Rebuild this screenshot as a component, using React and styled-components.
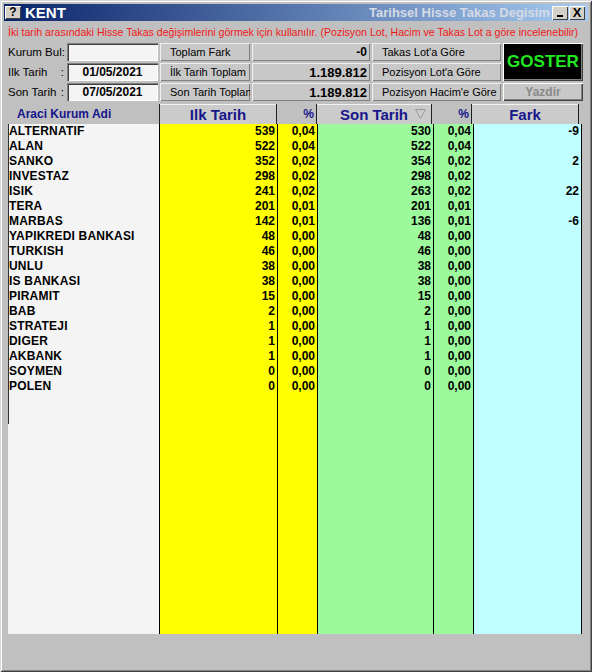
import React from 'react'
import styled, { createGlobalStyle } from 'styled-components'

const GlobalStyle = createGlobalStyle`
  html, body {
    margin: 0;
    padding: 0;
    background: #c0c0c0;
  }
  * {
    box-sizing: border-box;
  }
`

const rows = [
  ['ALTERNATIF', '539', '0,04', '530', '0,04', '-9'],
  ['ALAN', '522', '0,04', '522', '0,04', ''],
  ['SANKO', '352', '0,02', '354', '0,02', '2'],
  ['INVESTAZ', '298', '0,02', '298', '0,02', ''],
  ['ISIK', '241', '0,02', '263', '0,02', '22'],
  ['TERA', '201', '0,01', '201', '0,01', ''],
  ['MARBAS', '142', '0,01', '136', '0,01', '-6'],
  ['YAPIKREDI BANKASI', '48', '0,00', '48', '0,00', ''],
  ['TURKISH', '46', '0,00', '46', '0,00', ''],
  ['UNLU', '38', '0,00', '38', '0,00', ''],
  ['IS BANKASI', '38', '0,00', '38', '0,00', ''],
  ['PIRAMIT', '15', '0,00', '15', '0,00', ''],
  ['BAB', '2', '0,00', '2', '0,00', ''],
  ['STRATEJI', '1', '0,00', '1', '0,00', ''],
  ['DIGER', '1', '0,00', '1', '0,00', ''],
  ['AKBANK', '1', '0,00', '1', '0,00', ''],
  ['SOYMEN', '0', '0,00', '0', '0,00', ''],
  ['POLEN', '0', '0,00', '0', '0,00', ''],
]

const columns = [
  { key: 1, width: 118, bg: '#ffff00' },
  { key: 2, width: 40, bg: '#ffff00' },
  { key: 3, width: 116, bg: '#9cfa9c' },
  { key: 4, width: 40, bg: '#9cfa9c' },
  { key: 5, width: 108, bg: '#c0ffff' },
]

export default function App() {
  return (
    <>
      <GlobalStyle />
      <Window>
        <TitleBar>
          <HelpIcon>?</HelpIcon>
          <TitleText>KENT</TitleText>
          <Spacer />
          <SubTitle>Tarihsel Hisse Takas Degisim</SubTitle>
          <WinButtons>
            <WinButton><MinBar /></WinButton>
            <WinButton>X</WinButton>
          </WinButtons>
        </TitleBar>

        <Notice>
          İki tarih arasındaki Hisse Takas değişimlerini görmek için kullanılır. (Pozisyon Lot, Hacim ve Takas Lot a göre incelenebilir)
        </Notice>

        <Form>
          <Label><span>Kurum Bul</span><span>:</span></Label>
          <Field />
          <Button>Toplam Fark</Button>
          <Value $light>-0</Value>
          <Button>Takas Lot'a Göre</Button>
          <Goster>GOSTER</Goster>

          <Label><span>Ilk Tarih</span><span>:</span></Label>
          <Field $date>01/05/2021</Field>
          <Button>İlk Tarih Toplam</Button>
          <Value>1.189.812</Value>
          <Button>Pozisyon Lot'a Göre</Button>

          <Label><span>Son Tarih</span><span>:</span></Label>
          <Field $date>07/05/2021</Field>
          <Button>Son Tarih Toplam</Button>
          <Value>1.189.812</Value>
          <Button>Pozisyon Hacim'e Göre</Button>
          <Yazdir>Yazdir</Yazdir>
        </Form>

        <Table>
          <HeaderRow>
            <NameHeader>Araci Kurum Adi</NameHeader>
            <HeadButton $width={118}>Ilk Tarih</HeadButton>
            <PctHead $width={40}>%</PctHead>
            <HeadButton $width={116}>
              Son Tarih
              <SortIcon width="11" height="10" viewBox="0 0 11 10">
                <polygon points="0.5,0.5 10.5,0.5 5.5,9.5" fill="none" stroke="#9a9a9a" strokeWidth="1" />
              </SortIcon>
            </HeadButton>
            <PctHead $width={40}>%</PctHead>
            <HeadButton $width={108}>Fark</HeadButton>
          </HeaderRow>

          <Body>
            <NameColumn>
              {rows.map((r) => (
                <NameCell key={r[0]}>{r[0]}</NameCell>
              ))}
            </NameColumn>
            {columns.map((c) => (
              <DataColumn key={c.key} $width={c.width} $bg={c.bg}>
                {rows.map((r) => (
                  <NumCell key={r[0]}>{r[c.key]}</NumCell>
                ))}
              </DataColumn>
            ))}
          </Body>
        </Table>
      </Window>
    </>
  )
}

const Window = styled.div`
  width: 592px;
  height: 672px;
  background: #c0c0c0;
  padding: 4px;
  display: flex;
  flex-direction: column;
  box-shadow: inset 1px 1px #d8d8d8, inset -1px -1px #404040,
    inset 2px 2px #ffffff, inset -2px -2px #808080;
  font-family: 'Liberation Sans', Arial, sans-serif;
`

const TitleBar = styled.div`
  height: 17px;
  display: flex;
  align-items: center;
  background: linear-gradient(to right, #0a246a, #a6caf0);
  padding: 0 3px 0 1px;
`

const HelpIcon = styled.div`
  width: 16px;
  height: 13px;
  background: #d4d0c8;
  color: #000;
  font-weight: 700;
  font-size: 12px;
  line-height: 13px;
  text-align: center;
  box-shadow: inset 1px 1px #fff, inset -1px -1px #404040;
`

const TitleText = styled.div`
  color: #fff;
  font-weight: 700;
  font-size: 15px;
  margin-left: 4px;
`

const Spacer = styled.div`
  flex: 1;
`

const SubTitle = styled.div`
  width: 183px;
  overflow: hidden;
  white-space: nowrap;
  color: #d4dbe6;
  font-weight: 700;
  font-size: 13px;
`

const WinButtons = styled.div`
  display: flex;
  gap: 1px;
`

const WinButton = styled.div`
  width: 16px;
  height: 14px;
  background: #d4d0c8;
  box-shadow: inset 1px 1px #fff, inset -1px -1px #404040;
  display: flex;
  align-items: center;
  justify-content: center;
  font-weight: 700;
  font-size: 13px;
  color: #000;
`

const MinBar = styled.div`
  width: 6px;
  height: 2px;
  background: #000;
  margin-top: 6px;
`

const Notice = styled.div`
  height: 22px;
  padding-left: 4px;
  display: flex;
  align-items: center;
  white-space: nowrap;
  overflow: hidden;
  color: #f01818;
  font-size: 10.6px;
`

const Form = styled.div`
  padding-left: 4px;
  display: grid;
  grid-template-columns: 57px 91px 90px 118px 129px 80px;
  grid-template-rows: 18px 18px 18px;
  column-gap: 2px;
  row-gap: 2px;
  font-size: 11px;
  color: #000;
`

const Label = styled.div`
  display: flex;
  justify-content: space-between;
  align-items: center;
  white-space: nowrap;
  padding-right: 1px;
  font-size: 11.5px;
`

const Field = styled.div`
  background: #f4f4f4;
  box-shadow: inset 1px 1px #808080, inset 2px 2px #404040,
    inset -1px -1px #ffffff;
  display: flex;
  align-items: center;
  justify-content: center;
  font-weight: ${(p) => (p.$date ? 700 : 400)};
  font-size: 12px;
`

const Button = styled.div`
  background: #c8c8c8;
  box-shadow: inset 1px 1px #f0f0f0, inset -1px -1px #808080;
  display: flex;
  align-items: center;
  padding-left: 10px;
  white-space: nowrap;
  overflow: hidden;
`

const Value = styled.div`
  background: #c8c8c8;
  box-shadow: inset 1px 1px #f0f0f0, inset -1px -1px #808080;
  display: flex;
  align-items: center;
  justify-content: flex-end;
  padding-right: 3px;
  font-weight: 700;
  font-size: ${(p) => (p.$light ? '12px' : '13px')};
`

const Goster = styled.div`
  grid-column: 6;
  grid-row: 1 / span 2;
  background: #000;
  box-shadow: inset 1px 1px #ffffff, inset -1px -1px #404040,
    inset -2px -2px #808080;
  color: #22e822;
  font-weight: 700;
  font-size: 17px;
  display: flex;
  align-items: center;
  justify-content: center;
`

const Yazdir = styled.div`
  grid-column: 6;
  grid-row: 3;
  background: #c8c8c8;
  box-shadow: inset 1px 1px #ffffff, inset -1px -1px #404040,
    inset -2px -2px #808080;
  color: #8a8a8a;
  font-weight: 700;
  font-size: 12px;
  display: flex;
  align-items: center;
  justify-content: center;
`

const Table = styled.div`
  margin-top: 3px;
  margin-left: 4px;
  width: 577px;
  display: flex;
  flex-direction: column;
`

const HeaderRow = styled.div`
  height: 20px;
  display: flex;
`

const NameHeader = styled.div`
  width: 152px;
  padding-left: 9px;
  display: flex;
  align-items: center;
  color: #16168a;
  font-weight: 700;
  font-size: 12px;
`

const HeadButton = styled.div`
  width: ${(p) => p.$width}px;
  position: relative;
  background: #cbcbcb;
  border-left: 1px solid #202020;
  border-right: 1px solid #202020;
  box-shadow: inset 0 1px #f2f2f2;
  margin-left: -1px;
  display: flex;
  align-items: center;
  justify-content: center;
  color: #16168a;
  font-weight: 700;
  font-size: 15px;
`

const SortIcon = styled.svg`
  position: absolute;
  right: 5px;
  top: 5px;
`

const PctHead = styled.div`
  width: ${(p) => p.$width}px;
  display: flex;
  align-items: center;
  justify-content: flex-end;
  padding-right: 3px;
  color: #16168a;
  font-weight: 700;
  font-size: 12px;
`

const Body = styled.div`
  height: 510px;
  display: flex;
  font-weight: 700;
  font-size: 12px;
  color: #000;
`

const NameColumn = styled.div`
  width: 152px;
  background: #f4f4f4;
  border-right: 1px solid #000;
  position: relative;

  &::before {
    content: '';
    position: absolute;
    left: 0;
    top: 0;
    width: 1px;
    height: 300px;
    background: #303030;
  }
`

const DataColumn = styled.div`
  width: ${(p) => p.$width}px;
  background: ${(p) => p.$bg};
  border-right: 1px solid #000;
`

const NameCell = styled.div`
  height: 15px;
  line-height: 15px;
  padding-left: 1px;
  white-space: nowrap;
  letter-spacing: 0.2px;
`

const NumCell = styled.div`
  height: 15px;
  line-height: 15px;
  text-align: right;
  padding-right: 2px;
`
